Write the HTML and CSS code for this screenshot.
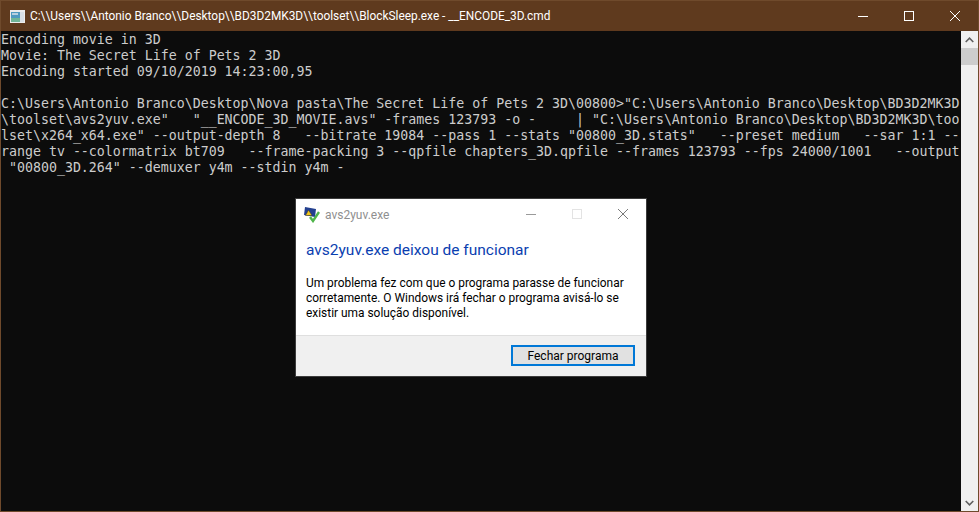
FILE: index.html
```html
<!DOCTYPE html>
<html lang="pt">
<head>
<meta charset="utf-8">
<title>BlockSleep</title>
<link rel="stylesheet" href="styles.css">
</head>
<body>
<div class="window">
  <header class="titlebar">
    <svg class="app-icon" width="15" height="13" viewBox="0 0 15 13">
      <rect x="0" y="0" width="15" height="13" fill="#ececec"/>
      <rect x="1" y="2" width="9" height="10" fill="#4f9ac0"/>
      <rect x="1" y="8" width="9" height="4" fill="#6fb598"/>
      <rect x="10" y="2" width="4" height="10" fill="#d8dfe5"/>
      <rect x="2" y="3" width="6" height="2" fill="#b8d0e0"/>
    </svg>
    <span class="title">C:\\Users\\Antonio Branco\\Desktop\\BD3D2MK3D\\toolset\\BlockSleep.exe - __ENCODE_3D.cmd</span>
    <div class="controls">
      <button class="ctl"><svg width="10" height="10" viewBox="0 0 10 10"><path d="M0 5.5H10" stroke="#fff" fill="none"/></svg></button>
      <button class="ctl"><svg width="10" height="10" viewBox="0 0 10 10"><rect x=".5" y=".5" width="9" height="9" stroke="#fff" fill="none"/></svg></button>
      <button class="ctl"><svg width="10" height="10" viewBox="0 0 10 10"><path d="M0 0L10 10M10 0L0 10" stroke="#fff" fill="none"/></svg></button>
    </div>
  </header>
  <div class="body">
    <pre class="console">Encoding movie in 3D
Movie: The Secret Life of Pets 2 3D
Encoding started 09/10/2019 14:23:00,95

C:\Users\Antonio Branco\Desktop\Nova pasta\The Secret Life of Pets 2 3D\00800&gt;"C:\Users\Antonio Branco\Desktop\BD3D2MK3D
\toolset\avs2yuv.exe"   "__ENCODE_3D_MOVIE.avs" -frames 123793 -o -     | "C:\Users\Antonio Branco\Desktop\BD3D2MK3D\too
lset\x264_x64.exe" --output-depth 8   --bitrate 19084 --pass 1 --stats "00800_3D.stats"   --preset medium   --sar 1:1 --
range tv --colormatrix bt709   --frame-packing 3 --qpfile chapters_3D.qpfile --frames 123793 --fps 24000/1001   --output
 "00800_3D.264" --demuxer y4m --stdin y4m -</pre>
    <div class="scrollbar">
      <div class="arrow"><svg width="9" height="6" viewBox="0 0 9 6"><path d="M.7 5L4.5 1.2L8.3 5" stroke="#606060" stroke-width="1.6" fill="none"/></svg></div>
      <div class="thumb"></div>
      <div class="track"></div>
      <div class="arrow"><svg width="9" height="6" viewBox="0 0 9 6"><path d="M.7 1L4.5 4.8L8.3 1" stroke="#606060" stroke-width="1.6" fill="none"/></svg></div>
    </div>
    <section class="dialog">
      <div class="dlg-title">
        <svg class="dlg-icon" width="16" height="17" viewBox="0 0 16 17">
          <path d="M1 1L12 3L11 11L0 9Z" fill="#24408f"/>
          <path d="M4.5 4L8 9.5H1.5Z" fill="#f2c81e" stroke="#333" stroke-width=".5"/>
          <path d="M6 11L9 15L15 6" stroke="#4fb54a" stroke-width="2.4" fill="none"/>
        </svg>
        <span class="dlg-name">avs2yuv.exe</span>
        <div class="dlg-controls">
          <span class="dctl"><svg width="10" height="10" viewBox="0 0 10 10"><path d="M0 5.5H10" stroke="#9a9a9a" fill="none"/></svg></span>
          <span class="dctl"><svg width="10" height="10" viewBox="0 0 10 10"><rect x=".5" y=".5" width="9" height="9" stroke="#e3e3e3" fill="none"/></svg></span>
          <span class="dctl"><svg width="10" height="10" viewBox="0 0 10 10"><path d="M0 0L10 10M10 0L0 10" stroke="#7a7a7a" fill="none"/></svg></span>
        </div>
      </div>
      <div class="dlg-main">
        <h1 class="dlg-head">avs2yuv.exe deixou de funcionar</h1>
        <p class="dlg-text">Um problema fez com que o programa parasse de funcionar corretamente. O Windows irá fechar o programa avisá-lo se existir uma solução disponível.</p>
      </div>
      <footer class="dlg-foot">
        <button class="dlg-btn">Fechar programa</button>
      </footer>
    </section>
  </div>
</div>
</body>
</html>
```
FILE: styles.css
```css
html, body { margin: 0; padding: 0; height: 100%; overflow: hidden; background: #0c0c0c; }
.window { box-sizing: border-box; width: 979px; height: 512px; border: 1px solid #6f4a2c; display: flex; flex-direction: column; }
.titlebar { height: 30px; flex: none; background: #5f3a1e; display: flex; align-items: center; color: #fff; font: 11.88px Roboto, sans-serif; }
.app-icon { margin-left: 9px; margin-right: 5px; }
.title { flex: 1; white-space: nowrap; }
.controls { display: flex; height: 100%; }
.ctl { width: 46px; height: 100%; padding: 0; background: none; border: 0; display: flex; align-items: center; justify-content: center; }
.ctl svg { display: block; }
.body { flex: 1; display: flex; position: relative; min-height: 0; }
.console { flex: 1; margin: 0; padding: 1px 0 0; background: #0c0c0c; color: #cccccc; font: 13.28px/16px "DejaVu Sans Mono", monospace; overflow: hidden; }
.scrollbar { width: 17px; flex: none; background: #f0f0f0; display: flex; flex-direction: column; }
.arrow { height: 17px; flex: none; display: flex; align-items: center; justify-content: center; }
.thumb { height: 17px; flex: none; background: #cdcdcd; }
.track { flex: 1; }
.dialog { position: absolute; left: 294px; top: 167px; width: 352px; height: 179px; box-sizing: border-box; border: 1px solid #3c3c3c; background: #fff; display: flex; flex-direction: column; font-family: Roboto, sans-serif; }
.dlg-title { height: 30px; flex: none; display: flex; align-items: center; }
.dlg-icon { margin-left: 8px; margin-right: 5px; }
.dlg-name { flex: 1; font-size: 12px; padding-top: 2px; color: #8f8f8f; }
.dlg-controls { display: flex; }
.dctl { width: 46px; display: flex; justify-content: center; }
.dlg-main { flex: 1; padding: 11px 10px 0; }
.dlg-head { margin: 0 0 16px; font-size: 15.5px; line-height: 20px; font-weight: 400; color: #0a3eb0; }
.dlg-text { margin: 0; font-size: 11.92px; line-height: 15px; color: #000; }
.dlg-foot { height: 41px; flex: none; background: #f0f0f0; border-top: 1px solid #dfdfdf; display: flex; align-items: flex-start; justify-content: flex-end; padding: 9px 11px 0 0; box-sizing: border-box; }
.dlg-btn { width: 124px; height: 21px; box-sizing: border-box; background: #e1e1e1; border: 2px solid #0078d7; padding: 0; color: #000; font: 12px Roboto, sans-serif; }
```
